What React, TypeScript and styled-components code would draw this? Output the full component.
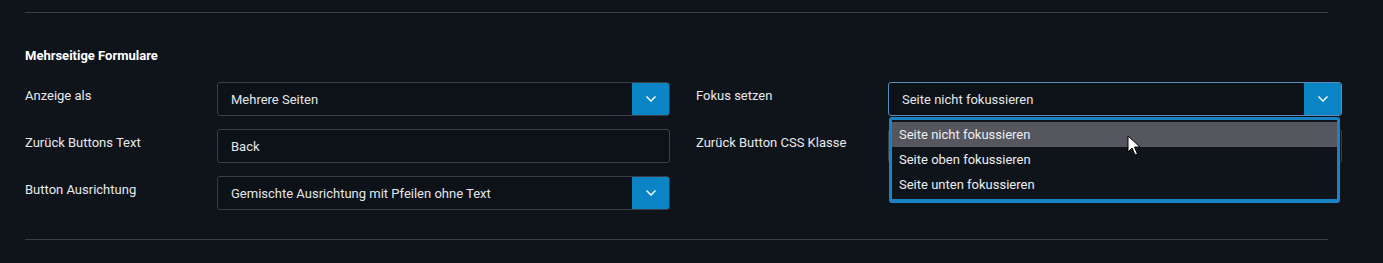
import React from 'react'
import styled, { createGlobalStyle } from 'styled-components';

const GlobalStyle = createGlobalStyle`
    * { box-sizing: border-box; }
    body {
        margin: 0;
        background: #0f141b;
        font-family: Roboto, "Liberation Sans", Arial, sans-serif;
        color: #e4e6e9;
    }
`

const Page = styled.div`
    position: relative;
    width: 1383px;
    height: 263px;
    padding: 12px 55px 0 25px;
`

const Divider = styled.hr`
    margin: 0;
    border: none;
    border-top: 1px solid #3a3f47;
    width: 1303px;
`

const SectionTitle = styled.h3`
    margin: 35px 0 0;
    font-size: 13px;
    font-weight: 700;
    line-height: 16px;
    color: #ffffff;
`

const Grid = styled.div`
    display: grid;
    grid-template-columns: 645px 646px;
    column-gap: 26px;
    row-gap: 13px;
    margin-top: 18px;
    margin-bottom: 29px;
`

const Row = styled.div`
    position: relative;
    display: flex;
    align-items: flex-start;
    min-height: 34px;
`

const Label = styled.label`
    width: 192px;
    flex-shrink: 0;
    padding-top: 6px;
    font-size: 13px;
    line-height: 16px;
    color: #e8e9eb;
`

const Control = styled.div<{ $focused?: boolean }>`
    flex: 1;
    display: flex;
    height: 34px;
    border: 1px solid ${p => p.$focused ? '#5a8cbd' : '#3a3f47'};
    border-radius: 3px;
    background: #0d1218;
    overflow: hidden;
`

const Value = styled.div`
    flex: 1;
    display: flex;
    align-items: center;
    padding-left: 13px;
    font-size: 13px;
    color: #e4e6e9;
`

const Caret = styled.div`
    width: 37px;
    display: flex;
    align-items: center;
    justify-content: center;
    background: #0a84c4;
`

const Menu = styled.ul`
    position: absolute;
    top: 35px;
    left: 193px;
    right: 2px;
    margin: 0;
    padding: 2px 0 2px;
    list-style: none;
    background: #0f141b;
    border: 3px solid #1a83c4;
    border-bottom-width: 4px;
    border-radius: 3px;
    z-index: 2;
`

const MenuItem = styled.li<{ $active?: boolean }>`
    height: 25px;
    display: flex;
    align-items: center;
    padding-left: 7px;
    font-size: 13px;
    color: #eceef0;
    background: ${p => p.$active ? '#55565e' : 'transparent'};
`

const Cursor = styled.svg`
    position: absolute;
    left: 1127px;
    top: 135px;
    z-index: 3;
`

function Chevron() {
    return (
        <svg width="12" height="8" viewBox="0 0 12 8">
            <path d="M1.5 1.5 L6 6 L10.5 1.5" fill="none" stroke="#ffffff" strokeWidth="1.4" />
        </svg>
    )
}

function Select({ value, focused }: { value: string, focused?: boolean }) {
    return (
        <Control $focused={focused}>
            <Value>{value}</Value>
            <Caret><Chevron /></Caret>
        </Control>
    )
}

export default function App() {
    const options = ['Seite nicht fokussieren', 'Seite oben fokussieren', 'Seite unten fokussieren'];

    return (
        <>
            <GlobalStyle />
            <Page>
                <Divider />
                <SectionTitle>Mehrseitige Formulare</SectionTitle>
                <Grid>
                    <Row>
                        <Label>Anzeige als</Label>
                        <Select value="Mehrere Seiten" />
                    </Row>
                    <Row>
                        <Label>Fokus setzen</Label>
                        <Select value="Seite nicht fokussieren" focused />
                        <Menu>
                            {options.map((o, i) => <MenuItem key={o} $active={i === 0}>{o}</MenuItem>)}
                        </Menu>
                    </Row>
                    <Row>
                        <Label>Zurück Buttons Text</Label>
                        <Control><Value>Back</Value></Control>
                    </Row>
                    <Row>
                        <Label>Zurück Button CSS Klasse</Label>
                        <Control><Value></Value></Control>
                    </Row>
                    <Row>
                        <Label>Button Ausrichtung</Label>
                        <Select value="Gemischte Ausrichtung mit Pfeilen ohne Text" />
                    </Row>
                    <Row />
                </Grid>
                <Divider />
                <Cursor width="14" height="22" viewBox="0 0 14 22">
                    <path d="M1 1 L1 17 L5 13 L8 20 L10.5 19 L7.5 12 L13 12 Z" fill="#ffffff" stroke="#000000" strokeWidth="1" />
                </Cursor>
            </Page>
        </>
    )
}
